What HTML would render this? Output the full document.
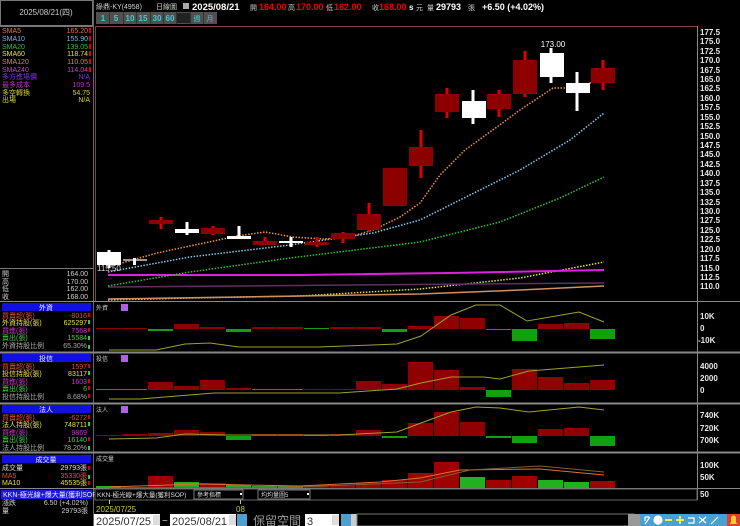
<!DOCTYPE html>
<html><head><meta charset="utf-8"><style>
html,body{margin:0;padding:0;background:#000;width:740px;height:526px;overflow:hidden}
svg{display:block}
text{font-family:"Liberation Sans","Noto Sans CJK TC",sans-serif}
.s{font-size:7px}
.ax{font-size:8px;font-weight:bold;fill:#e8e8e8}
</style></head><body>
<svg width="740" height="526" viewBox="0 0 740 526" xmlns="http://www.w3.org/2000/svg">
<rect width="740" height="526" fill="#000"/>
<!-- left panel frames -->
<rect x="0.5" y="0.5" width="92" height="25" fill="none" stroke="#777"/>
<text x="46" y="15" fill="#ccc" font-size="8" text-anchor="middle" font-family="Liberation Serif,serif">2025/08/21(四)</text>
<line x1="0" y1="26.5" x2="93" y2="26.5" stroke="#777"/>
<line x1="93.5" y1="0" x2="93.5" y2="526" stroke="#666"/>
<line x1="95.5" y1="26" x2="95.5" y2="302" stroke="#804050"/>
<g class="s">
<text x="2" y="33" fill="#e07830">SMA5</text><text x="88" y="33" fill="#e07830" text-anchor="end">165.20</text>
<text x="2" y="41" fill="#7ab8e8">SMA10</text><text x="88" y="41" fill="#7ab8e8" text-anchor="end">155.90</text>
<text x="2" y="49" fill="#30c030">SMA20</text><text x="88" y="49" fill="#30c030" text-anchor="end">139.05</text>
<text x="2" y="56" fill="#e8e040">SMA60</text><text x="88" y="56" fill="#e8e040" text-anchor="end">118.74</text>
<text x="2" y="64" fill="#c09070">SMA120</text><text x="88" y="64" fill="#c09070" text-anchor="end">110.05</text>
<text x="2" y="72" fill="#c040c0">SMA240</text><text x="88" y="72" fill="#c040c0" text-anchor="end">114.04</text>
<text x="2" y="79" fill="#8030e0">多方進場價</text><text x="90" y="79" fill="#8030e0" text-anchor="end">N/A</text>
<text x="2" y="87" fill="#c030c0">最多成本</text><text x="90" y="87" fill="#c030c0" text-anchor="end">109.5</text>
<text x="2" y="95" fill="#d0d030">多空轉換</text><text x="90" y="95" fill="#d0d030" text-anchor="end">54.75</text>
<text x="2" y="102" fill="#d0d030">出場</text><text x="90" y="102" fill="#d0d030" text-anchor="end">N/A</text>
</g>
<g fill="#d00">
<rect x="89" y="28" width="2" height="5"/><rect x="89" y="36" width="2" height="5"/><rect x="89" y="44" width="2" height="5"/><rect x="89" y="51" width="2" height="5"/><rect x="89" y="59" width="2" height="5"/><rect x="89" y="67" width="2" height="5"/>
</g>
<line x1="0" y1="268.5" x2="93" y2="268.5" stroke="#777"/>
<g class="s" fill="#ccc">
<text x="2" y="276">開</text><text x="88" y="276" text-anchor="end">164.00</text>
<text x="2" y="284">高</text><text x="88" y="284" text-anchor="end">170.00</text>
<text x="2" y="291">低</text><text x="88" y="291" text-anchor="end">162.00</text>
<text x="2" y="299">收</text><text x="88" y="299" text-anchor="end">168.00</text>
</g>
<!-- section blocks -->
<g>
<line x1="0" y1="301.5" x2="740" y2="301.5" stroke="#888"/>
<line x1="0" y1="352.5" x2="740" y2="352.5" stroke="#888" stroke-width="2"/>
<line x1="0" y1="403.5" x2="740" y2="403.5" stroke="#888" stroke-width="2"/>
<line x1="0" y1="452.5" x2="740" y2="452.5" stroke="#888" stroke-width="2"/>
<line x1="0" y1="488.5" x2="740" y2="488.5" stroke="#888"/>
<line x1="697.5" y1="26" x2="697.5" y2="500" stroke="#888"/>
<line x1="95" y1="26.5" x2="697" y2="26.5" stroke="#804050"/>
</g>
<rect x="2" y="303" width="89" height="8" fill="#1010e0"/><text x="46" y="310" class="s" fill="#eee" text-anchor="middle">外資</text>
<g class="s">
<text x="2" y="318" fill="#e05030">買賣超(張)</text><text x="87" y="318" fill="#e05030" text-anchor="end">-8016</text>
<text x="2" y="325" fill="#e8e040">外資持股(張)</text><text x="87" y="325" fill="#e8e040" text-anchor="end">625297</text>
<text x="2" y="333" fill="#d030d0">買進(張)</text><text x="87" y="333" fill="#d030d0" text-anchor="end">7568</text>
<text x="2" y="340" fill="#40d040">賣出(張)</text><text x="87" y="340" fill="#40d040" text-anchor="end">15584</text>
<text x="2" y="348" fill="#aaa">外資持股比例</text><text x="87" y="348" fill="#aaa" text-anchor="end">65.30%</text>
</g>
<rect x="2" y="354" width="89" height="8" fill="#1010e0"/><text x="46" y="361" class="s" fill="#eee" text-anchor="middle">投信</text>
<g class="s">
<text x="2" y="369" fill="#e05030">買賣超(張)</text><text x="87" y="369" fill="#e05030" text-anchor="end">1597</text>
<text x="2" y="376" fill="#e8e040">投信持股(張)</text><text x="87" y="376" fill="#e8e040" text-anchor="end">83117</text>
<text x="2" y="384" fill="#d030d0">買進(張)</text><text x="87" y="384" fill="#d030d0" text-anchor="end">1603</text>
<text x="2" y="391" fill="#40d040">賣出(張)</text><text x="87" y="391" fill="#40d040" text-anchor="end">6</text>
<text x="2" y="399" fill="#aaa">投信持股比例</text><text x="87" y="399" fill="#aaa" text-anchor="end">8.68%</text>
</g>
<rect x="2" y="405" width="89" height="8" fill="#1010e0"/><text x="46" y="412" class="s" fill="#eee" text-anchor="middle">法人</text>
<g class="s">
<text x="2" y="420" fill="#e05030">買賣超(張)</text><text x="87" y="420" fill="#e05030" text-anchor="end">-6272</text>
<text x="2" y="427" fill="#e8e040">法人持股(張)</text><text x="87" y="427" fill="#e8e040" text-anchor="end">748711</text>
<text x="2" y="435" fill="#d030d0">買進(張)</text><text x="87" y="435" fill="#d030d0" text-anchor="end">9869</text>
<text x="2" y="442" fill="#40d040">賣出(張)</text><text x="87" y="442" fill="#40d040" text-anchor="end">16140</text>
<text x="2" y="450" fill="#aaa">法人持股比例</text><text x="87" y="450" fill="#aaa" text-anchor="end">78.20%</text>
</g>
<rect x="2" y="455" width="89" height="8" fill="#1010e0"/><text x="46" y="462" class="s" fill="#eee" text-anchor="middle">成交量</text>
<g class="s">
<text x="2" y="470" fill="#ddd">成交量</text><text x="87" y="470" fill="#ddd" text-anchor="end">29793張</text>
<text x="2" y="478" fill="#e05030">MA5</text><text x="87" y="478" fill="#e05030" text-anchor="end">35330張</text>
<text x="2" y="485" fill="#e8e040">MA10</text><text x="87" y="485" fill="#e8e040" text-anchor="end">45535張</text>
</g>
<g fill="#3c3"><rect x="88" y="320" width="2" height="4"/><rect x="88" y="336" width="2" height="4"/><rect x="88" y="371" width="2" height="4"/><rect x="88" y="422" width="2" height="4"/><rect x="88" y="475" width="2" height="4"/><rect x="88" y="345" width="2" height="4"/><rect x="88" y="446" width="2" height="4"/></g>
<g fill="#d00"><rect x="88" y="313" width="2" height="4"/><rect x="88" y="328" width="2" height="4"/><rect x="88" y="364" width="2" height="4"/><rect x="88" y="379" width="2" height="4"/><rect x="88" y="386" width="2" height="4"/><rect x="88" y="394" width="2" height="4"/><rect x="88" y="415" width="2" height="4"/><rect x="88" y="437" width="2" height="4"/><rect x="88" y="466" width="2" height="4"/><rect x="88" y="481" width="2" height="4"/></g>
<rect x="1" y="490" width="91" height="9" fill="#1818e0"/><text x="3" y="497" class="s" fill="#eee">KKN-極光線+爆大量(獲利SOP)</text>
<g class="s" fill="#ccc"><text x="2" y="505">漲跌</text><text x="88" y="505" text-anchor="end">6.50 (+4.02%)</text>
<text x="2" y="513">量</text><text x="88" y="513" text-anchor="end">29793張</text></g>

<!-- header -->
<text x="96" y="9" fill="#ccc" font-size="7">綠鼎-KY(4958)</text>
<text x="156" y="9" fill="#ccc" font-size="7">日線圖</text>
<rect x="183" y="3" width="6" height="6" fill="#aaa"/>
<text x="192" y="10" fill="#fff" font-size="9.5" font-weight="bold">2025/08/21</text>
<text x="250" y="10" fill="#ccc" font-size="7">開</text><text x="259" y="10" fill="#e00" font-size="9" font-weight="bold">164.00</text>
<text x="288" y="10" fill="#ccc" font-size="7">高</text><text x="296" y="10" fill="#e00" font-size="9" font-weight="bold">170.00</text>
<text x="326" y="10" fill="#ccc" font-size="7">低</text><text x="334" y="10" fill="#e00" font-size="9" font-weight="bold">162.00</text>
<text x="372" y="10" fill="#ccc" font-size="7">收</text><text x="379" y="10" fill="#e00" font-size="9" font-weight="bold">168.00</text>
<text x="409" y="10" fill="#fff" font-size="8" font-weight="bold">s</text><text x="416" y="10" fill="#ccc" font-size="7">元</text>
<text x="427" y="10" fill="#ccc" font-size="7">量</text><text x="436" y="10" fill="#fff" font-size="9" font-weight="bold">29793</text>
<text x="468" y="10" fill="#ccc" font-size="7">張</text>
<text x="482" y="10" fill="#fff" font-size="9" font-weight="bold">+6.50 (+4.02%)</text>
<g font-size="8" font-weight="bold" text-anchor="middle">
<rect x="96" y="12" width="121" height="12" fill="#505050"/>
<g stroke="#333"><line x1="109.5" y1="12" x2="109.5" y2="24"/><line x1="123.5" y1="12" x2="123.5" y2="24"/><line x1="136.5" y1="12" x2="136.5" y2="24"/><line x1="150.5" y1="12" x2="150.5" y2="24"/><line x1="163.5" y1="12" x2="163.5" y2="24"/><line x1="176.5" y1="12" x2="176.5" y2="24"/><line x1="190.5" y1="12" x2="190.5" y2="24"/><line x1="203.5" y1="12" x2="203.5" y2="24"/></g>
<rect x="177" y="13" width="13" height="10" fill="#222"/>
<text x="103" y="21" fill="#3cd0d0">1</text><text x="116" y="21" fill="#3cd0d0">5</text><text x="130" y="21" fill="#3cd0d0">10</text><text x="143" y="21" fill="#3cd0d0">15</text><text x="157" y="21" fill="#3cd0d0">30</text><text x="170" y="21" fill="#3cd0d0">60</text>
<text x="197" y="21" fill="#3cd0d0" font-size="7" font-weight="normal">週</text><text x="210" y="21" fill="#3cd0d0" font-size="7" font-weight="normal">月</text>
</g>

<!-- price axis -->
<g class="ax">
<text x="700" y="35">177.5</text><text x="700" y="44">175.0</text><text x="700" y="54">172.5</text><text x="700" y="63">170.0</text><text x="700" y="73">167.5</text><text x="700" y="82">165.0</text><text x="700" y="91">162.5</text><text x="700" y="101">160.0</text><text x="700" y="110">157.5</text><text x="700" y="120">155.0</text><text x="700" y="129">152.5</text><text x="700" y="139">150.0</text><text x="700" y="148">147.5</text><text x="700" y="157">145.0</text><text x="700" y="167">142.5</text><text x="700" y="176">140.0</text><text x="700" y="186">137.5</text><text x="700" y="195">135.0</text><text x="700" y="205">132.5</text><text x="700" y="214">130.0</text><text x="700" y="223">127.5</text><text x="700" y="233">125.0</text><text x="700" y="242">122.5</text><text x="700" y="252">120.0</text><text x="700" y="261">117.5</text><text x="700" y="271">115.0</text><text x="700" y="280">112.5</text><text x="700" y="289">110.0</text>
<text x="700" y="319">10K</text><text x="700" y="331">0</text><text x="698" y="343">-10K</text>
<text x="700" y="369">4000</text><text x="700" y="381">2000</text><text x="700" y="393">0</text>
<text x="700" y="418">740K</text><text x="700" y="431">720K</text><text x="700" y="443">700K</text>
<text x="700" y="468">100K</text><text x="700" y="480">50K</text><text x="700" y="497">50</text>
</g>

<!-- MA lines -->
<polyline points="108,300 190,298 300,296 420,289 520,278 604,262" fill="none" stroke="#e8e040" stroke-width="1.5" stroke-dasharray="1.5 1.5"/>
<polyline points="108,299 300,296 420,294 520,290 604,286" fill="none" stroke="#d09060" stroke-width="1.5"/>
<line x1="108" y1="287" x2="604" y2="283" stroke="#603060" stroke-width="1.5"/>
<polyline points="108,275 300,275 450,273 604,270" fill="none" stroke="#e020e0" stroke-width="2"/>
<polyline points="108,286 190,272 290,258 420,242 500,222 560,198 604,177" fill="none" stroke="#30c030" stroke-width="1.5" stroke-dasharray="1.5 1.5"/>
<polyline points="108,272 190,257 290,245 373,233 420,220 460,200 520,170 570,140 604,113" fill="none" stroke="#80c8f0" stroke-width="1.5" stroke-dasharray="1.5 1.5"/>
<polyline points="108,267 157,253 190,246 237,236 265,232 293,237 323,239 350,237 373,230 400,217 420,203 440,175 465,150 497,127 520,110 553,88 577,88 590,83 605,78" fill="none" stroke="#f09040" stroke-width="1.5" stroke-dasharray="1.5 1.5"/>

<!-- candles -->
<g fill="#e00000">
<rect x="159.5" y="217" width="3" height="12"/><rect x="211.5" y="226" width="3" height="9"/><rect x="263.5" y="237" width="3" height="8"/><rect x="315.5" y="237" width="3" height="10"/><rect x="341.5" y="232" width="3" height="11"/><rect x="367.5" y="203" width="3" height="29"/><rect x="419.5" y="130" width="3" height="48"/><rect x="445.5" y="88" width="3" height="30"/><rect x="497.5" y="90" width="3" height="27"/><rect x="523.5" y="51" width="3" height="46"/><rect x="601.5" y="60" width="3" height="30"/>
</g>
<g fill="#8c0000">
<rect x="149" y="220" width="24" height="4"/><rect x="201" y="228" width="24" height="6"/><rect x="253" y="241" width="24" height="4"/><rect x="305" y="242" width="24" height="3"/><rect x="331" y="233" width="24" height="6"/><rect x="357" y="214" width="24" height="16"/><rect x="383" y="168" width="24" height="38"/><rect x="409" y="147" width="24" height="19"/><rect x="435" y="94" width="24" height="18"/><rect x="487" y="94" width="24" height="15"/><rect x="513" y="60" width="24" height="34"/><rect x="591" y="68" width="24" height="15"/>
</g>
<g fill="#fff">
<rect x="107.5" y="250" width="3" height="18"/><rect x="97" y="252" width="24" height="13"/>
<rect x="123" y="259" width="24" height="2" fill="#999"/><rect x="133" y="258" width="3" height="7"/>
<rect x="185.5" y="222" width="3" height="13"/><rect x="175" y="229" width="24" height="4"/>
<rect x="237.5" y="226" width="3" height="13"/><rect x="227" y="236" width="24" height="3"/>
<rect x="289.5" y="237" width="3" height="10"/><rect x="279" y="241" width="24" height="2"/>
<rect x="471.5" y="90" width="3" height="34"/><rect x="462" y="101" width="24" height="17"/>
<rect x="549.5" y="48" width="3" height="35"/><rect x="540" y="53" width="24" height="24"/>
<rect x="575.5" y="72" width="3" height="39"/><rect x="566" y="83" width="24" height="10"/>
</g>
<text x="553" y="47" fill="#fff" font-size="8" text-anchor="middle">173.00</text>
<text x="97" y="271" fill="#ddd" font-size="8">115.50</text>

<!-- panel labels -->
<g font-size="6" fill="#ccc"><text x="96" y="310">外資</text><text x="96" y="361">投信</text><text x="96" y="412">法人</text><text x="96" y="461">成交量</text></g>
<g fill="#b060e0"><rect x="121" y="304" width="7" height="7"/><rect x="121" y="355" width="7" height="7"/><rect x="121" y="406" width="7" height="7"/></g>

<!-- panel 1 bars (zero 329) -->
<g fill="#900000">
<rect x="96" y="328" width="25" height="1"/><rect x="122" y="328" width="25" height="1"/><rect x="174" y="324" width="25" height="5"/><rect x="200" y="327" width="25" height="2"/><rect x="252" y="327" width="25" height="2"/><rect x="278" y="327" width="25" height="2"/><rect x="330" y="327" width="25" height="2"/><rect x="356" y="327" width="25" height="2"/><rect x="408" y="326" width="25" height="3"/><rect x="434" y="316" width="25" height="13"/><rect x="460" y="318" width="25" height="11"/><rect x="538" y="324" width="25" height="5"/><rect x="564" y="323" width="25" height="6"/>
</g>
<g fill="#10a010">
<rect x="148" y="329" width="25" height="2"/><rect x="226" y="329" width="25" height="3"/><rect x="304" y="328" width="25" height="1"/><rect x="382" y="329" width="25" height="3"/><rect x="486" y="329" width="25" height="1"/><rect x="512" y="329" width="25" height="12"/><rect x="590" y="329" width="25" height="10"/>
</g>
<polyline points="109,350 156,350 185,344 210,343 239,347 318,347 397,344 421,336 451,315 476,305 500,305 527,321 579,312 604,322" fill="none" stroke="#a0a030" stroke-width="1"/>

<!-- panel 2 (zero 390) -->
<g fill="#900000">
<rect x="148" y="382" width="25" height="8"/><rect x="174" y="386" width="25" height="4"/><rect x="200" y="380" width="25" height="10"/><rect x="226" y="388" width="25" height="2"/><rect x="304" y="389" width="25" height="1"/><rect x="330" y="389" width="25" height="1"/><rect x="356" y="381" width="25" height="9"/><rect x="382" y="384" width="25" height="6"/><rect x="408" y="362" width="25" height="28"/><rect x="434" y="370" width="25" height="20"/><rect x="460" y="387" width="25" height="3"/><rect x="512" y="369" width="25" height="21"/><rect x="538" y="377" width="25" height="13"/><rect x="564" y="383" width="25" height="7"/><rect x="590" y="380" width="25" height="10"/>
</g>
<g fill="#10a010"><rect x="96" y="389" width="51" height="1"/><rect x="252" y="389" width="51" height="1"/><rect x="486" y="390" width="25" height="7"/></g>
<polyline points="109,399 140,399 214,393 339,393 397,389 421,383 451,377 484,377 500,379 529,371 604,365" fill="none" stroke="#a0a030" stroke-width="1"/>

<!-- panel 3 (zero 436) -->
<g fill="#900000">
<rect x="96" y="435" width="25" height="1"/><rect x="122" y="434" width="25" height="2"/><rect x="148" y="433" width="25" height="3"/><rect x="174" y="430" width="25" height="6"/><rect x="200" y="432" width="25" height="4"/><rect x="252" y="434" width="25" height="2"/><rect x="278" y="434" width="25" height="2"/><rect x="330" y="434" width="25" height="2"/><rect x="356" y="430" width="25" height="6"/><rect x="408" y="423" width="25" height="13"/><rect x="434" y="412" width="25" height="24"/><rect x="460" y="422" width="25" height="14"/><rect x="538" y="429" width="25" height="7"/><rect x="564" y="428" width="25" height="8"/>
</g>
<g fill="#10a010"><rect x="226" y="436" width="25" height="4"/><rect x="304" y="435" width="25" height="1"/><rect x="382" y="436" width="25" height="2"/><rect x="486" y="436" width="25" height="2"/><rect x="512" y="436" width="25" height="7"/><rect x="590" y="436" width="25" height="10"/></g>
<polyline points="109,439 156,438 185,434 227,435 339,435 397,432 421,423 451,412 476,407 500,408 529,412 579,407 604,410" fill="none" stroke="#a0a030" stroke-width="1"/>

<!-- volume (base 488) -->
<g fill="#a00000">
<rect x="122" y="487" width="25" height="1"/><rect x="148" y="476" width="25" height="12"/><rect x="200" y="483" width="25" height="5"/><rect x="304" y="485" width="25" height="3"/><rect x="330" y="485" width="25" height="3"/><rect x="356" y="483" width="25" height="5"/><rect x="382" y="480" width="25" height="8"/><rect x="408" y="473" width="25" height="15"/><rect x="434" y="462" width="25" height="26"/><rect x="486" y="480" width="25" height="8"/><rect x="512" y="476" width="25" height="12"/><rect x="590" y="481" width="25" height="7"/>
</g>
<g fill="#20b020">
<rect x="96" y="486" width="25" height="2"/><rect x="174" y="482" width="25" height="6"/><rect x="226" y="485" width="25" height="3"/><rect x="252" y="486" width="25" height="2"/><rect x="278" y="486" width="25" height="2"/><rect x="460" y="477" width="25" height="11"/><rect x="538" y="480" width="25" height="8"/><rect x="564" y="482" width="25" height="6"/>
</g>
<polyline points="109,487 200,484 300,486 380,482 420,478 460,470 540,469 604,475" fill="none" stroke="#e07030" stroke-width="1"/>
<polyline points="109,488 300,487 420,482 470,470 540,466 604,472" fill="none" stroke="#806030" stroke-width="1"/>

<!-- dropdown row -->
<rect x="95" y="489" width="602" height="11" fill="#000" stroke="#666"/>
<text x="97" y="497" font-size="6.5" fill="#ddd">KKN-極光線+爆大量(獲利SOP)</text>
<rect x="194" y="490" width="49" height="9" fill="#000" stroke="#777"/><text x="197" y="497" font-size="6" fill="#ddd">參考指標</text><rect x="240" y="493" width="2" height="2" fill="#fff"/>
<rect x="258" y="490" width="52" height="9" fill="#000" stroke="#777"/><text x="261" y="497" font-size="6" fill="#ddd">均均量圖5</text><rect x="307" y="493" width="2" height="2" fill="#fff"/>
<line x1="109.5" y1="500" x2="109.5" y2="504" stroke="#cc4"/><line x1="240.5" y1="500" x2="240.5" y2="504" stroke="#cc4"/>
<text x="96" y="512" font-size="8" fill="#cccc30">2025/07/25</text>
<text x="236" y="512" font-size="8" fill="#cccc30">08</text>

<!-- bottom bar -->
<rect x="94" y="514" width="66" height="12" fill="#fff"/><text x="96" y="525" font-size="11" fill="#333" font-family="Liberation Serif,serif">2025/07/25</text>
<rect x="153" y="515" width="7" height="10" fill="#ddd"/>
<text x="162" y="524" font-size="10" fill="#ccc">~</text>
<rect x="170" y="514" width="66" height="12" fill="#fff"/><text x="172" y="525" font-size="11" fill="#333" font-family="Liberation Serif,serif">2025/08/21</text>
<rect x="229" y="515" width="7" height="10" fill="#ddd"/>
<rect x="237" y="514" width="10" height="12" fill="#4aa0d0"/>
<text x="253" y="525" font-size="12" fill="#999">保留空間</text>
<rect x="305" y="514" width="34" height="12" fill="#fff"/><text x="307" y="525" font-size="11" fill="#333" font-family="Liberation Serif,serif">3</text>
<rect x="332" y="515" width="7" height="10" fill="#ddd"/>
<rect x="341" y="514" width="10" height="12" fill="#4aa0d0"/>
<rect x="351" y="514" width="6" height="12" fill="#ccc"/>
<rect x="357" y="514" width="277" height="12" fill="#000" stroke="#777"/>
<rect x="628" y="514" width="12" height="12" fill="#999"/>
<rect x="640" y="514" width="87" height="12" fill="#4aa0d0"/>
<g fill="none" stroke="#fff" stroke-width="1.2"><path d="M645 524 L650 517 M645 517h4M645 517v4"/><circle cx="658" cy="520" r="4" fill="#fff"/><line x1="665" y1="520" x2="672" y2="520" stroke="#ee4" stroke-width="2"/><path d="M676 520h8M680 516v8" stroke="#ee4" stroke-width="2"/><path d="M688 518h6v5h-6"/><path d="M699 517l7 6M706 517l-7 6"/><path d="M711 524l7-7"/></g>
<rect x="727" y="514" width="13" height="12" fill="#e04030"/>
<path d="M730 524h7l-1-2v-4a2.5 2.5 0 0 0-5 0v4z" fill="#ffcc30"/>
</svg>
</body></html>
